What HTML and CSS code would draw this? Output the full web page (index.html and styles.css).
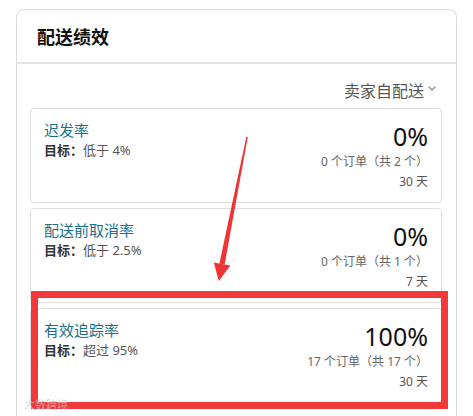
FILE: index.html
```html
<!DOCTYPE html>
<html lang="zh">
<head>
<meta charset="utf-8">
<link rel="stylesheet" href="styles.css">
</head>
<body>
<div class="panel">
  <div class="panel-head">配送绩效</div>
  <div class="panel-body">
    <div class="filter">
      <span>卖家自配送</span>
      <svg class="chev" width="8" height="5" viewBox="0 0 8 5"><path d="M0.5 0.5 L4 4 L7.5 0.5" fill="none" stroke="#888" stroke-width="1.1"/></svg>
    </div>
    <div class="metric">
      <div class="m-left">
        <div class="m-title">迟发率</div>
        <div class="m-target"><b>目标：</b>低于 4%</div>
      </div>
      <div class="m-right">
        <div class="m-value">0%</div>
        <div class="m-orders">0 个订单（共 2 个）</div>
        <div class="m-days">30 天</div>
      </div>
    </div>
    <div class="metric">
      <div class="m-left">
        <div class="m-title">配送前取消率</div>
        <div class="m-target"><b>目标：</b>低于 2.5%</div>
      </div>
      <div class="m-right">
        <div class="m-value">0%</div>
        <div class="m-orders">0 个订单（共 1 个）</div>
        <div class="m-days">7 天</div>
      </div>
    </div>
    <div class="metric">
      <div class="m-left">
        <div class="m-title">有效追踪率</div>
        <div class="m-target"><b>目标：</b>超过 95%</div>
      </div>
      <div class="m-right">
        <div class="m-value">100%</div>
        <div class="m-orders">17 个订单（共 17 个）</div>
        <div class="m-days">30 天</div>
      </div>
    </div>
  </div>
</div>
<div class="highlight"></div>
<svg class="arrow" width="473" height="416" viewBox="0 0 473 416">
  <polygon points="246.3,137 247.8,137 224.6,264.6 219.4,263.6" fill="#ee3434"/>
  <polygon points="213.8,262.4 230.4,265.6 218.8,281" fill="#ee3434"/>
</svg>
<div class="watermark">大数跨境</div>
</body>
</html>
```
FILE: styles.css
```css
html, body {
  margin: 0;
  padding: 0;
  background: #fff;
}
body {
  font-family: "Noto Sans", "Noto Sans CJK SC", sans-serif;
  color: #333;
  position: relative;
  width: 473px;
  height: 416px;
  overflow: hidden;
}
.panel {
  margin: 9px 0 0 16px;
  width: 439px;
  height: 440px;
  border: 1px solid #dcdcdc;
  border-radius: 8px;
}
.panel-head {
  height: 54px;
  border-bottom: 2px solid #e3e3e3;
  box-sizing: border-box;
  padding-left: 20px;
  font-size: 18px;
  font-weight: bold;
  color: #111;
  line-height: 54px;
}
.panel-body {
  padding: 17px 14px 0 13px;
}
.filter {
  display: flex;
  justify-content: flex-end;
  align-items: center;
  gap: 4px;
  height: 18px;
  font-size: 16px;
  color: #555;
  margin-bottom: 9px;
}
.filter .chev {
  margin-top: -3px;
  margin-right: 6px;
}
.metric {
  display: flex;
  justify-content: space-between;
  height: 95px;
  box-sizing: border-box;
  border: 1px solid #dedede;
  border-radius: 4px;
  padding: 11px 13px 0 13px;
  margin-bottom: 5px;
}
.m-title {
  font-size: 15px;
  line-height: 20px;
  color: #1a7189;
}
.m-target {
  font-size: 13px;
  line-height: 20px;
  color: #555;
}
.m-target b {
  color: #333;
  font-weight: bold;
}
.m-right {
  text-align: right;
}
.m-value {
  font-size: 25px;
  line-height: 30px;
  color: #111;
  margin-top: 1px;
}
.m-orders {
  font-size: 12px;
  line-height: 20px;
  color: #666;
  margin-top: 1px;
}
.m-days {
  font-size: 12px;
  line-height: 19px;
  color: #555;
}
.highlight {
  position: absolute;
  left: 31px;
  top: 291px;
  width: 403px;
  height: 104px;
  border: 7px solid #f03a3a;
}
.arrow {
  position: absolute;
  left: 0;
  top: 0;
}
.watermark {
  position: absolute;
  left: 24px;
  top: 398px;
  font-size: 11px;
  line-height: 14px;
  color: rgba(200, 200, 200, 0.7);
}
```
